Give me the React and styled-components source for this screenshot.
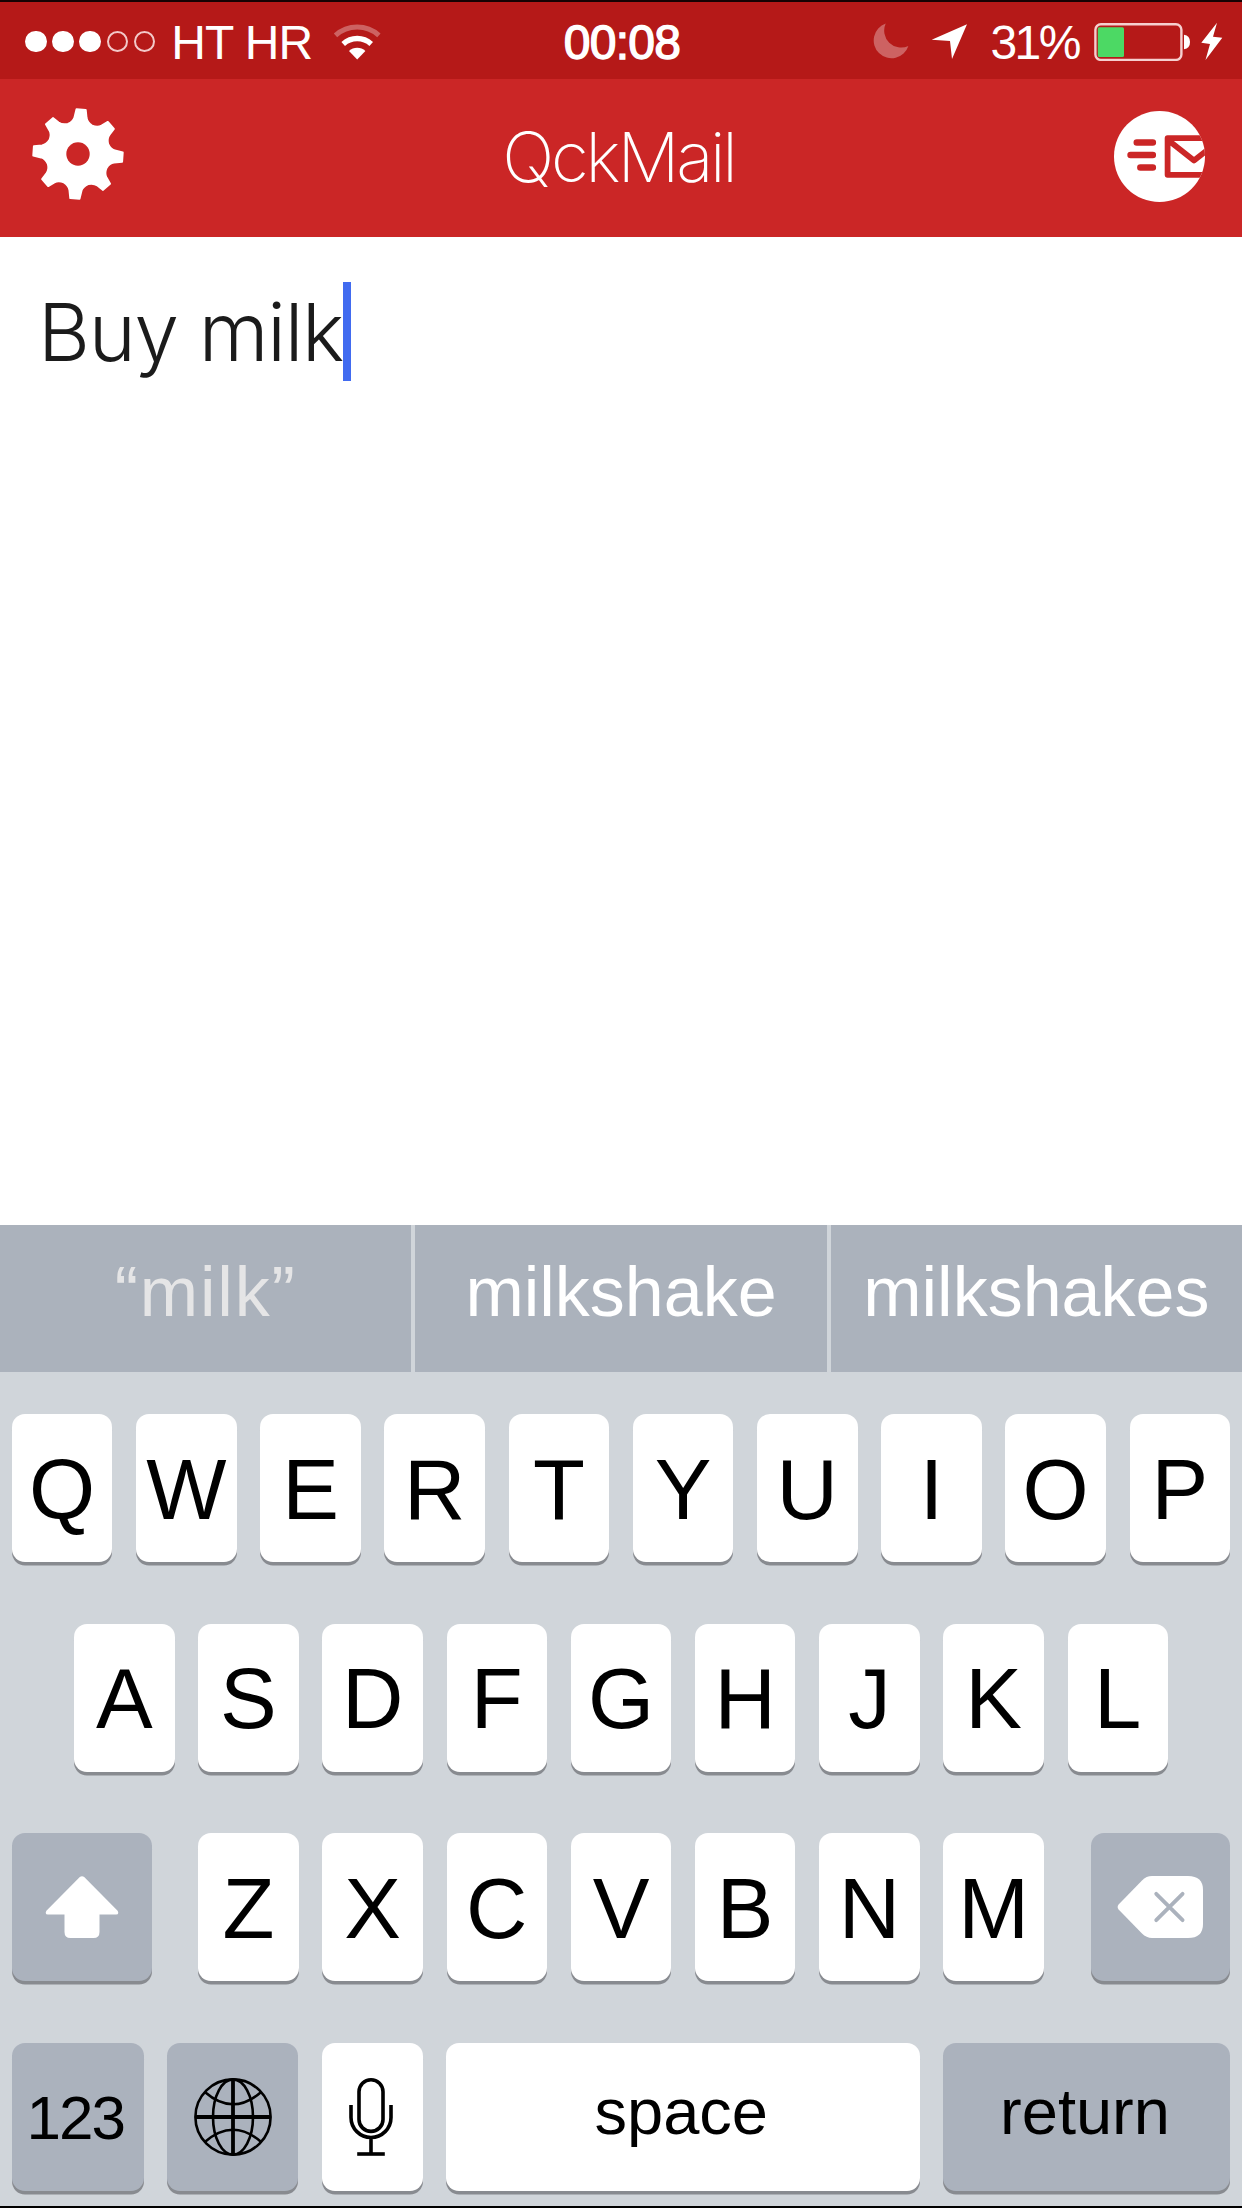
import React from 'react';
import styled, { createGlobalStyle } from 'styled-components';

const GlobalStyle = createGlobalStyle`
  body {
    margin: 0;
    background: #fff;
  }
`;

const Screen = styled.div`
  box-sizing: border-box;
  display: flex;
  flex-direction: column;
  width: 1242px;
  height: 2208px;
  border-top: 2px solid #160203;
  border-bottom: 2px solid #000;
  overflow: hidden;
  background: #fff;
  font-family: 'Liberation Sans', Arial, sans-serif;
`;

const StatusBar = styled.div`
  box-sizing: border-box;
  display: grid;
  grid-template-columns: 1fr auto 1fr;
  align-items: center;
  height: 77px;
  padding: 2px 19px 0 25px;
  background: #b51918;
  color: #fff;
  font-size: 48px;
  line-height: 72px;
`;

const StatusGroup = styled.div`
  display: flex;
  align-items: center;
  justify-content: ${props => (props.$end ? 'flex-end' : 'flex-start')};

  svg {
    flex: none;
    display: block;
  }
`;

const Signal = styled.div`
  display: flex;
  gap: 5.6px;
  margin-right: 16px;
`;

const Dot = styled.span`
  box-sizing: border-box;
  width: 21.6px;
  height: 21.6px;
  border: 2px solid ${props => (props.$on ? '#fff' : '#f3c9c9')};
  border-radius: 50%;
  background: ${props => (props.$on ? '#fff' : 'transparent')};
`;

const StatusText = styled.span`
  padding-top: 2px;
  letter-spacing: -1px;
`;

const Carrier = styled(StatusText)`
  margin-right: 21px;
`;

const Percent = styled(StatusText)`
  margin: 0 15px 0 22px;
  letter-spacing: -2.5px;
`;

const Clock = styled(StatusText)`
  padding-right: 4px;
  letter-spacing: -0.7px;
  -webkit-text-stroke: 1.4px #fff;
`;

const Moon = styled.svg`
  margin-right: 22px;
`;

const Battery = styled.svg`
  margin-right: 11px;
`;

const Header = styled.header`
  box-sizing: border-box;
  display: grid;
  grid-template-columns: 1fr auto 1fr;
  align-items: center;
  height: 157.5px;
  padding: 0 37px 0 31px;
  background: #cb2626;
`;

const Title = styled.h1`
  margin: 0;
  padding: 0 0 2px 1px;
  font-family: Inter, 'Liberation Sans', sans-serif;
  font-size: 69px;
  font-weight: 250;
  letter-spacing: -3.2px;
  line-height: 80px;
  color: #fff;
`;

const IconButton = styled.button`
  display: flex;
  justify-self: ${props => (props.$end ? 'end' : 'start')};
  padding: 0 0 ${props => (props.$end ? 2 : 7)}px;
  border: 0;
  background: none;
`;

const Editor = styled.main`
  box-sizing: border-box;
  display: flex;
  align-items: center;
  height: 99px;
  margin: 45px 0 844px;
  padding-left: 38px;
  font-family: Inter, 'Liberation Sans', sans-serif;
  font-size: 80px;
  font-weight: 300;
  letter-spacing: -1.3px;
  line-height: 101px;
  color: #1b1b1b;
`;

const Caret = styled.span`
  width: 8px;
  height: 99px;
  background: #416bf0;
`;

const Suggestions = styled.div`
  display: grid;
  grid-template-columns: repeat(3, 1fr);
  gap: 4px;
  height: 147.5px;
  background: #d0d5da;
`;

const Suggestion = styled.div`
  box-sizing: border-box;
  display: flex;
  align-items: center;
  justify-content: center;
  padding-bottom: 13px;
  background: #abb2bc;
  font-size: 70px;
  color: ${props => (props.$typed ? '#e5e5e6' : '#fff')};
  letter-spacing: ${props => (props.$typed ? '1.8px' : '0')};
`;

const Keyboard = styled.div`
  flex: 1;
  display: flex;
  flex-direction: column;
  gap: 61.6px;
  padding: 42px 12px 0;
  background: #d0d5da;
`;

const KeyRow = styled.div`
  display: flex;
  justify-content: ${props => (props.$spread ? 'space-between' : 'center')};
  gap: ${props => (props.$spread ? '0' : '23.7px')};
`;

const Letters = styled.div`
  display: flex;
  gap: 23.7px;
`;

const Key = styled.button`
  box-sizing: border-box;
  flex: none;
  display: flex;
  align-items: center;
  justify-content: center;
  width: ${props => props.$width || 100.5}px;
  height: 148px;
  padding: 2px 0 0;
  border: 0;
  border-radius: 13px;
  background: ${props => (props.$dark ? '#abb2bd' : '#fff')};
  box-shadow: 0 3.5px 0 #888b90;
  font-family: inherit;
  font-size: 85px;
  line-height: 1;
  color: #000;
`;

const IconKey = styled(Key)`
  padding: 0;
`;

const WordKey = styled(Key)`
  padding: 0 3px 10px 0;
  font-size: 65px;
`;

const NumberKey = styled(Key)`
  padding: 3px 5px 0 0;
  font-size: 62px;
  letter-spacing: -2px;
`;

const MicKey = styled(IconKey)`
  padding-right: 3px;
`;

// Eight teeth, each narrowing outward, joined by shallow valleys
const gearPath = () => {
  const parts = [];
  for (let i = 0; i < 8; i += 1) {
    const a = (i * 45 + 4) * Math.PI / 180;
    const reach = i % 2 ? 43.5 : 44.5;
    const p = (x, y) =>
      `${(x * Math.cos(a) - y * Math.sin(a)).toFixed(2)} ${(x * Math.sin(a) + y * Math.cos(a)).toFixed(2)}`;
    parts.push(
      `${i ? 'L' : 'M'}${p(-6, -36.5)} L${p(-4.6, -reach)} L${p(4.6, -reach)} L${p(6, -36.5)}`,
      `Q${p(7, -32)} ${p(12.1, -29.3)}`,
      `Q${p(17.7, -27.6)} ${p(21.6, -30)}`,
    );
  }
  return `${parts.join(' ')}Z`;
};

const GearIcon = () => (
  <svg width="94" height="94" viewBox="-47 -47 94 94">
    <path d={gearPath()} fill="#fff" stroke="#fff" strokeWidth="2" strokeLinejoin="round" />
    <circle r="11.7" fill="#cb2626" />
  </svg>
);

const SendIcon = () => (
  <svg width="91" height="91" viewBox="0 0 91 91">
    <clipPath id="disc">
      <circle cx="45.5" cy="45.5" r="45.5" />
    </clipPath>
    <circle cx="45.5" cy="45.5" r="45.5" fill="#fff" />
    <g clipPath="url(#disc)" fill="none" stroke="#cb2626" strokeWidth="6.6" strokeLinecap="round">
      <path d="M22.8 31.5H38.8M16.6 44H38.8M26.4 56.5H38.8" />
      <path d="M100 27.2H53.6V63.8H100M54 29L80 49.5L94 38.5" strokeWidth="5.8" strokeLinejoin="round" />
    </g>
  </svg>
);

const WifiIcon = () => (
  <svg width="49" height="36" viewBox="0 0 49 36">
    <g fill="none" stroke="#fff">
      <path d="M2.5 11.3A32.5 32.5 0 0 1 45.9 11.3" strokeWidth="5" opacity="0.32" />
      <path d="M10.2 19.9A21 21 0 0 1 38.2 19.9" strokeWidth="5.4" />
    </g>
    <path d="M24.2 35.5L16 27A12 12 0 0 1 32.4 27Z" fill="#fff" />
  </svg>
);

const MoonIcon = () => (
  <Moon width="37" height="37" viewBox="0 0 37 37">
    <path
      d="M13.7 0.6A17.8 17.8 0 1 0 36.4 23A17 17 0 0 1 13.7 0.6Z"
      fill="#fff"
      opacity="0.32"
    />
  </Moon>
);

const ArrowIcon = () => (
  <svg width="37" height="36" viewBox="0 0 37 36">
    <path d="M36 0.3L0.7 15.7L19 17L21 35Z" fill="#fff" />
  </svg>
);

const BatteryIcon = () => (
  <Battery width="96" height="38" viewBox="0 0 96 38">
    <rect x="1.4" y="1.3" width="86" height="35.6" rx="5.5" fill="none" stroke="#f6cfcf" strokeWidth="2.4" />
    <rect x="3.8" y="4.2" width="26.2" height="29.8" rx="1.5" fill="#4cd964" />
    <path d="M90 11.7Q96 12.5 96 19T90 26.3Z" fill="#fff" />
  </Battery>
);

const BoltIcon = () => (
  <svg width="22" height="39" viewBox="0 0 22 39">
    <path d="M16 0.7L0.3 20.7L9 22L4.5 38L21.3 15.7L12 14.7Z" fill="#fff" />
  </svg>
);

const ShiftIcon = () => (
  <svg width="74" height="62" viewBox="0 0 74 62">
    <path
      d="M34.8 1.1Q37 -0.8 39.2 1.1L72.6 34.8Q74.5 38.4 71 38.4H54.5V56Q54.5 62 48.5 62H25.5Q19.5 62 19.5 56V38.4H3Q-0.5 38.4 1.4 34.8Z"
      fill="#fff"
    />
  </svg>
);

const DeleteIcon = () => (
  <svg width="86" height="62" viewBox="0 0 86 62">
    <path
      d="M1.6 28.4L25 4.4Q29.4 0 35 0H71Q86 0 86 14V48Q86 62 71 62H35Q29.4 62 25 57.6L1.6 33.6Q-0.4 31 1.6 28.4Z"
      fill="#fff"
    />
    <path d="M39.2 17.8L65.6 44.2M65.6 17.8L39.2 44.2" stroke="#abb2bd" strokeWidth="3.8" strokeLinecap="round" />
  </svg>
);

const GlobeIcon = () => (
  <svg width="78" height="78" viewBox="0 0 78 78" fill="none" stroke="#000" strokeWidth="2.6">
    <circle cx="39" cy="39" r="37.6" />
    <ellipse cx="39" cy="39" rx="20" ry="37.6" />
    <path d="M10.8 14Q39 38.5 67.2 14M10.8 64Q39 39.5 67.2 64" />
    <path d="M39 1V77M1 39H77" strokeWidth="3.8" />
  </svg>
);

const MicIcon = () => (
  <svg width="44" height="78" viewBox="0 0 44 78" fill="none" stroke="#000" strokeWidth="3.6">
    <rect x="10" y="1.8" width="24" height="51.6" rx="12" />
    <path d="M2 27V39.5A20 20 0 0 0 42 39.5V27M22 60V76" />
    <path d="M8.2 76H35.8" />
  </svg>
);

const letterKeys = letters =>
  letters.split('').map(letter => <Key key={letter}>{letter}</Key>);

export default () =>
  (<Screen>
    <GlobalStyle />
    <StatusBar>
      <StatusGroup>
        <Signal>
          {[true, true, true, false, false].map((on, i) => <Dot key={i} $on={on} />)}
        </Signal>
        <Carrier>HT HR</Carrier>
        <WifiIcon />
      </StatusGroup>
      <Clock>00:08</Clock>
      <StatusGroup $end>
        <MoonIcon />
        <ArrowIcon />
        <Percent>31%</Percent>
        <BatteryIcon />
        <BoltIcon />
      </StatusGroup>
    </StatusBar>
    <Header>
      <IconButton>
        <GearIcon />
      </IconButton>
      <Title>QckMail</Title>
      <IconButton $end>
        <SendIcon />
      </IconButton>
    </Header>
    <Editor>
      Buy milk
      <Caret />
    </Editor>
    <Suggestions>
      <Suggestion $typed>“milk”</Suggestion>
      <Suggestion>milkshake</Suggestion>
      <Suggestion>milkshakes</Suggestion>
    </Suggestions>
    <Keyboard>
      <KeyRow>{letterKeys('QWERTYUIOP')}</KeyRow>
      <KeyRow>{letterKeys('ASDFGHJKL')}</KeyRow>
      <KeyRow $spread>
        <IconKey $dark $width={139.5}>
          <ShiftIcon />
        </IconKey>
        <Letters>{letterKeys('ZXCVBNM')}</Letters>
        <IconKey $dark $width={139.5}>
          <DeleteIcon />
        </IconKey>
      </KeyRow>
      <KeyRow $spread>
        <NumberKey $dark $width={131.5}>123</NumberKey>
        <IconKey $dark $width={131.5}>
          <GlobeIcon />
        </IconKey>
        <MicKey $width={101}>
          <MicIcon />
        </MicKey>
        <WordKey $width={474}>space</WordKey>
        <WordKey $dark $width={287}>return</WordKey>
      </KeyRow>
    </Keyboard>
  </Screen>);
